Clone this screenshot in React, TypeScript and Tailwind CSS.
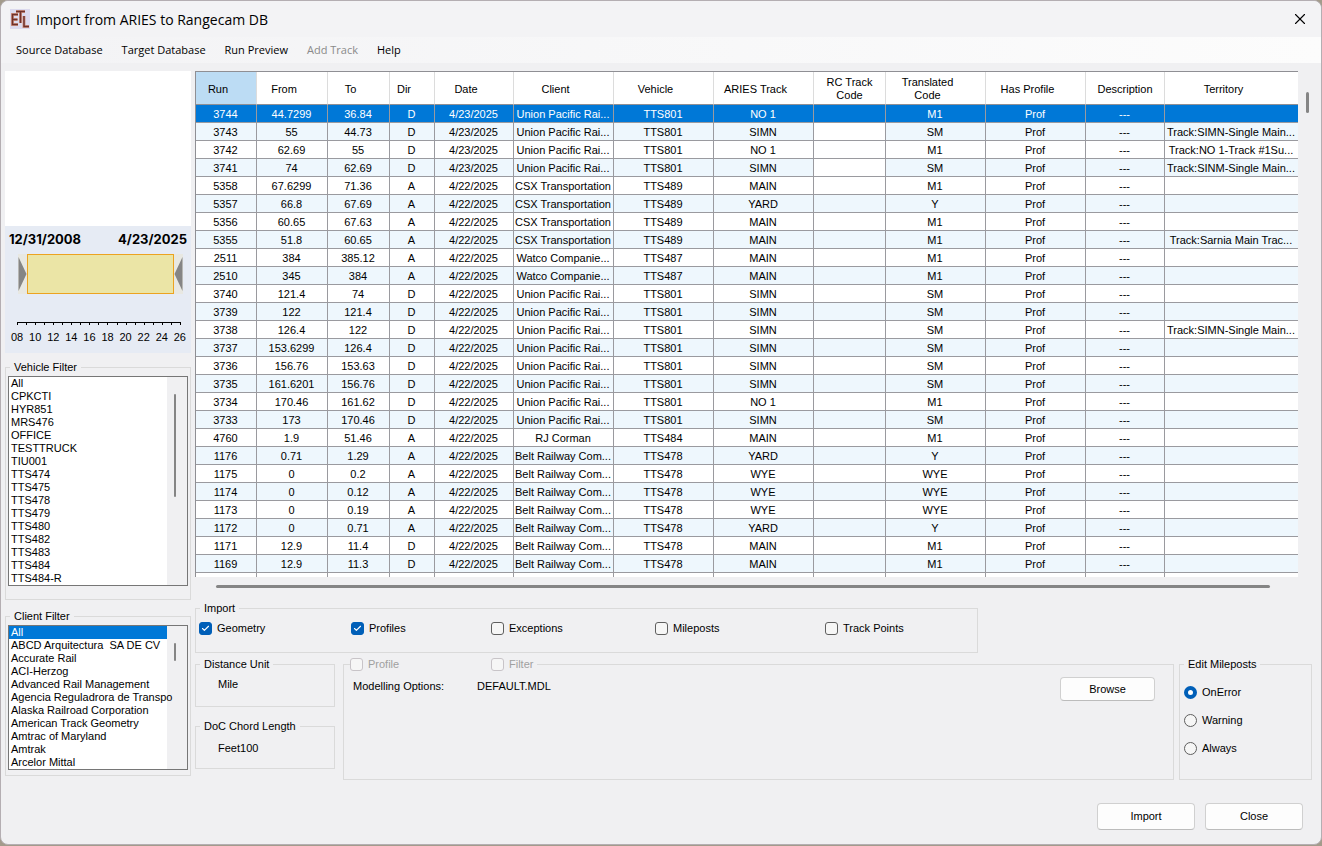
import { Check, X } from "lucide-react";
import type { ReactNode } from "react";

const columns = [
  { title: "Run", width: "w-[61px]", pad: "pr-4" },
  { title: "From", width: "w-[71px]", pad: "pr-4" },
  { title: "To", width: "w-[62px]", pad: "pr-4" },
  { title: "Dir", width: "w-[45px]", pad: "pr-4" },
  { title: "Date", width: "w-[79px]", pad: "pr-4" },
  { title: "Client", width: "w-[100px]", pad: "pr-4" },
  { title: "Vehicle", width: "w-[100px]", pad: "pr-4" },
  { title: "ARIES Track", width: "w-[100px]", pad: "pr-4" },
  { title: "RC Track\nCode", width: "w-[72px]", pad: "pr-0" },
  { title: "Translated\nCode", width: "w-[100px]", pad: "pr-4" },
  { title: "Has Profile", width: "w-[100px]", pad: "pr-4" },
  { title: "Description", width: "w-[79px]", pad: "pr-0" },
  { title: "Territory", width: "", pad: "pr-4" },
];

const UP = "Union Pacific Rai...";
const CSX = "CSX Transportation";
const WATCO = "Watco Companie...";
const BELT = "Belt Railway Com...";

// run, from, to, dir, date, client, vehicle, track, translated code, territory
const runs: string[][] = [
  ["3744", "44.7299", "36.84", "D", "4/23/2025", UP, "TTS801", "NO 1", "M1", ""],
  ["3743", "55", "44.73", "D", "4/23/2025", UP, "TTS801", "SIMN", "SM", "Track:SIMN-Single Main..."],
  ["3742", "62.69", "55", "D", "4/23/2025", UP, "TTS801", "NO 1", "M1", "Track:NO 1-Track #1Su..."],
  ["3741", "74", "62.69", "D", "4/23/2025", UP, "TTS801", "SIMN", "SM", "Track:SINM-Single Main..."],
  ["5358", "67.6299", "71.36", "A", "4/22/2025", CSX, "TTS489", "MAIN", "M1", ""],
  ["5357", "66.8", "67.69", "A", "4/22/2025", CSX, "TTS489", "YARD", "Y", ""],
  ["5356", "60.65", "67.63", "A", "4/22/2025", CSX, "TTS489", "MAIN", "M1", ""],
  ["5355", "51.8", "60.65", "A", "4/22/2025", CSX, "TTS489", "MAIN", "M1", "Track:Sarnia Main Trac..."],
  ["2511", "384", "385.12", "A", "4/22/2025", WATCO, "TTS487", "MAIN", "M1", ""],
  ["2510", "345", "384", "A", "4/22/2025", WATCO, "TTS487", "MAIN", "M1", ""],
  ["3740", "121.4", "74", "D", "4/22/2025", UP, "TTS801", "SIMN", "SM", ""],
  ["3739", "122", "121.4", "D", "4/22/2025", UP, "TTS801", "SIMN", "SM", ""],
  ["3738", "126.4", "122", "D", "4/22/2025", UP, "TTS801", "SIMN", "SM", "Track:SIMN-Single Main..."],
  ["3737", "153.6299", "126.4", "D", "4/22/2025", UP, "TTS801", "SIMN", "SM", ""],
  ["3736", "156.76", "153.63", "D", "4/22/2025", UP, "TTS801", "SIMN", "SM", ""],
  ["3735", "161.6201", "156.76", "D", "4/22/2025", UP, "TTS801", "SIMN", "SM", ""],
  ["3734", "170.46", "161.62", "D", "4/22/2025", UP, "TTS801", "NO 1", "M1", ""],
  ["3733", "173", "170.46", "D", "4/22/2025", UP, "TTS801", "SIMN", "SM", ""],
  ["4760", "1.9", "51.46", "A", "4/22/2025", "RJ Corman", "TTS484", "MAIN", "M1", ""],
  ["1176", "0.71", "1.29", "A", "4/22/2025", BELT, "TTS478", "YARD", "Y", ""],
  ["1175", "0", "0.2", "A", "4/22/2025", BELT, "TTS478", "WYE", "WYE", ""],
  ["1174", "0", "0.12", "A", "4/22/2025", BELT, "TTS478", "WYE", "WYE", ""],
  ["1173", "0", "0.19", "A", "4/22/2025", BELT, "TTS478", "WYE", "WYE", ""],
  ["1172", "0", "0.71", "A", "4/22/2025", BELT, "TTS478", "YARD", "Y", ""],
  ["1171", "12.9", "11.4", "D", "4/22/2025", BELT, "TTS478", "MAIN", "M1", ""],
  ["1169", "12.9", "11.3", "D", "4/22/2025", BELT, "TTS478", "MAIN", "M1", ""],
];

const vehicles = [
  "All", "CPKCTI", "HYR851", "MRS476", "OFFICE", "TESTTRUCK", "TIU001", "TTS474",
  "TTS475", "TTS478", "TTS479", "TTS480", "TTS482", "TTS483", "TTS484", "TTS484-R",
];

const clients = [
  "All", "ABCD Arquitectura  SA DE CV", "Accurate Rail", "ACI-Herzog",
  "Advanced Rail Management", "Agencia Reguladrora de Transpo", "Alaska Railroad Corporation",
  "American Track Geometry", "Amtrac of Maryland", "Amtrak", "Arcelor Mittal",
];

const years = ["08", "10", "12", "14", "16", "18", "20", "22", "24", "26"];
const ticks = Array.from({ length: 19 }, (_, i) => i);

function Group({ title, className, children }: { title: string; className: string; children: ReactNode }) {
  return (
    <fieldset className={`min-w-0 border border-[#dadada] ${className}`}>
      <legend className="ml-1 px-1 leading-[14px]">{title}</legend>
      {children}
    </fieldset>
  );
}

function ListBox({ label, items, selected, thumb }: { label: string; items: string[]; selected?: string; thumb: string }) {
  return (
    <div className="mx-0.5 mt-0.5 flex border border-[#767676]">
      <ul role="listbox" aria-label={label} className="min-w-0 flex-1 bg-white">
        {items.map((item) => (
          <li
            key={item}
            role="option"
            aria-selected={item === selected}
            className={`h-[13px] pl-0.5 leading-[13px] whitespace-pre ${item === selected ? "bg-[#0078d7] text-white" : ""}`}
          >
            {item}
          </li>
        ))}
      </ul>
      <div className="flex w-5 pl-[7px]">
        <div className={`w-0.5 rounded bg-[#858585] ${thumb}`} />
      </div>
    </div>
  );
}

function CheckBox({ label, checked, disabled, className = "" }: { label: string; checked?: boolean; disabled?: boolean; className?: string }) {
  return (
    <label className={`flex items-center gap-[5px] ${disabled ? "text-[#a0a0a0]" : ""} ${className}`}>
      <span className="grid size-[13px]">
        <input
          type="checkbox"
          defaultChecked={checked}
          disabled={disabled}
          className="col-start-1 row-start-1 size-[13px] appearance-none rounded-[3px] border border-[#5f5f5f] bg-[#f6f6f6] checked:border-[#005fb8] checked:bg-[#005fb8] disabled:border-[#c8c4c8]"
        />
        {checked && <Check className="pointer-events-none col-start-1 row-start-1 m-0.5 size-[9px] text-white" strokeWidth={3} />}
      </span>
      {label}
    </label>
  );
}

function Radio({ label, checked }: { label: string; checked?: boolean }) {
  return (
    <label className="flex h-[28px] items-center gap-[5px]">
      <input
        type="radio"
        name="edit-mileposts"
        defaultChecked={checked}
        className="size-[13px] appearance-none rounded-full border border-[#5f5f5f] bg-[#f6f6f6] checked:border-4 checked:border-[#005fb8] checked:bg-white"
      />
      {label}
    </label>
  );
}

const button = "rounded border border-[#d0d0d0] border-b-[#bcbcbc] bg-[#fdfdfd] text-center";

function Logo() {
  return (
    <svg viewBox="0 0 20 20" className="size-5" fill="none" aria-hidden="true">
      <rect width="20" height="20" fill="#dcdaee" />
      <g stroke="#cf9585" strokeWidth="3">
        <path d="M8 5.5H2.5V15.5H8M2.5 10.5H7.5M6 2.5H15M10.5 2.5V14M14 7V17.5H19" />
      </g>
      <g stroke="#6f302c" strokeWidth="1.5">
        <path d="M8 5.5H2.5V15.5H8M2.5 10.5H7.5M6 2.5H15M10.5 2.5V14M14 7V17.5H19" />
      </g>
    </svg>
  );
}

function Timeline() {
  return (
    <section className="bg-[#e6ebf4] px-1 pt-[6px] pb-[9px]">
      <div className="flex justify-between font-[Inter,sans-serif] text-[13px] leading-[14px] font-bold">
        <span>12/31/2008</span>
        <span>4/23/2025</span>
      </div>
      <div className="mt-2 flex h-10 items-stretch bg-[#e6ebf4] pr-1 pl-[9px]">
        <svg viewBox="0 0 9 40" className="h-10 w-[9px] bg-[#e8e8e2]" aria-hidden="true">
          <path d="M0.5 3 8.5 20 0.5 37Z" fill="#858585" />
        </svg>
        <div className="flex-1 border border-[#eca320] bg-[#ebe5a6]" />
        <svg viewBox="0 0 9 40" className="h-10 w-[9px] bg-[#e8e8e2]" aria-hidden="true">
          <path d="M8.5 3 0.5 20 8.5 37Z" fill="#858585" />
        </svg>
      </div>
      <div className="mt-[28px] mr-[6px] ml-2 flex justify-between border-t border-black">
        {ticks.map((t) => (
          <span key={t} className="h-0.5 w-px bg-black" />
        ))}
      </div>
      <div className="mt-[5px] flex justify-between pr-px pl-0.5 leading-[14px]">
        {years.map((y) => (
          <span key={y}>{y}</span>
        ))}
      </div>
    </section>
  );
}

function RunTable() {
  return (
    <div className="flex">
      <div className="min-w-0 flex-1 overflow-hidden border-t border-l border-[#8f8f94] bg-white">
        <table className="w-full table-fixed border-separate border-spacing-0 text-center">
          <thead>
            <tr className="h-[33px]">
              {columns.map((c, i) => (
                <th
                  key={c.title}
                  className={`border-b border-[#8f8f94] pt-0.5 pb-0 pl-0 leading-[13px] font-normal whitespace-pre-line ${c.pad} ${c.width} ${i === 0 ? "bg-[#bcdcf4]" : ""} ${i < 12 ? "border-r border-r-[#dcdcdc]" : ""}`}
                >
                  {c.title}
                </th>
              ))}
            </tr>
          </thead>
          <tbody>
            {runs.map((r, i) => {
              const cells = [...r.slice(0, 8), "", r[8], "Prof", "---", r[9]];
              const tone = i === 0 ? "bg-[#0078d7] text-white" : i % 2 ? "bg-[#eef7fd]" : "bg-white";
              return (
                <tr key={r[0]} className={`h-[18px] ${tone}`}>
                  {cells.map((cell, j) => (
                    <td
                      key={j}
                      className={`h-[18px] overflow-hidden border-b border-[#9a9a9f] p-0 pt-px pr-px leading-[16px] whitespace-nowrap ${j < 12 ? "border-r" : ""} ${j === 8 && (i === 1 || i === 3) ? "bg-white" : ""}`}
                    >
                      {cell}
                    </td>
                  ))}
                </tr>
              );
            })}
            <tr className="h-1">
              {columns.map((c, j) => (
                <td key={c.title} className={`h-1 p-0 ${j < 12 ? "border-r border-[#9a9a9f]" : ""}`} />
              ))}
            </tr>
          </tbody>
        </table>
      </div>
      <div className="flex w-[23px] pt-[21px] pl-2">
        <div className="h-[21px] w-[3px] rounded bg-[#858585]" />
      </div>
    </div>
  );
}

export default function App() {
  return (
    <div className="min-h-screen bg-[#a39b8b]">
      <div className="flex min-h-[845px] flex-col rounded-lg border border-[#b4aeb2] bg-[#f0f0f2] font-['Liberation_Sans',Arial,sans-serif] text-[11px] text-black">
        <header className="flex h-[36px] items-center rounded-t-lg bg-[#f3f3f5] pr-3 pl-[9px]">
          <Logo />
          <h1 className="ml-[6px] flex-1 font-['Open_Sans',sans-serif] text-[14px]">Import from ARIES to Rangecam DB</h1>
          <button type="button" aria-label="Close window">
            <X className="size-[18px]" strokeWidth={1.5} />
          </button>
        </header>
        <nav className="flex h-[26px] items-center gap-[19px] bg-gradient-to-r from-[#f3f3f5] to-[#fcfcfc] pl-[15px] font-['Open_Sans',sans-serif] text-[11px]">
          <button type="button">Source Database</button>
          <button type="button">Target Database</button>
          <button type="button">Run Preview</button>
          <button type="button" disabled className="text-[#8a8a8a]">Add Track</button>
          <button type="button">Help</button>
        </nav>

        <main className="flex pt-2 pl-1">
          <aside className="flex w-[186px] flex-col">
            <div className="h-[155px] bg-white" />
            <Timeline />
            <Group title="Vehicle Filter" className="mt-[7px] pb-[13px]">
              <ListBox label="Vehicle Filter" items={vehicles} thumb="mt-[17px] h-[103px]" />
            </Group>
            <Group title="Client Filter" className="mt-[9px] pb-[5px]">
              <ListBox label="Client Filter" items={clients} selected="All" thumb="mt-[17px] h-[18px]" />
            </Group>
          </aside>

          <div className="ml-1 min-w-0 flex-1">
            <RunTable />
            <div className="mt-2 mr-[51px] ml-[21px] h-[3px] rounded bg-[#858585]" />

            <Group title="Import" className="mt-[13px] h-[52px] w-[783px]">
              <div className="flex items-center pt-[5px] pl-[3px]">
                <CheckBox label="Geometry" checked className="w-[152px]" />
                <CheckBox label="Profiles" checked className="w-[140px]" />
                <CheckBox label="Exceptions" className="w-[164px]" />
                <CheckBox label="Mileposts" className="w-[170px]" />
                <CheckBox label="Track Points" />
              </div>
            </Group>

            <div className="mt-1 mr-[9px] flex">
              <div className="w-[140px]">
                <Group title="Distance Unit" className="h-[50px]">
                  <p className="pt-[6px] pl-[22px] leading-[14px]">Mile</p>
                </Group>
                <Group title="DoC Chord Length" className="mt-[12px] h-[50px]">
                  <p className="pt-2 pl-[22px] leading-[14px]">Feet100</p>
                </Group>
              </div>

              <fieldset className="ml-2 h-[123px] min-w-0 flex-1 border border-[#dadada]">
                <legend className="ml-[6px] flex">
                  <CheckBox label="Profile" disabled className="w-[141px] leading-[14px]" />
                  <CheckBox label="Filter" disabled className="pr-1 leading-[14px]" />
                </legend>
                <div className="flex items-start pr-[18px] pl-[9px]">
                  <span className="w-[124px] pt-2 leading-[14px]">Modelling Options:</span>
                  <span className="flex-1 pt-2 leading-[14px]">DEFAULT.MDL</span>
                  <button type="button" className={`mt-[6px] h-6 w-[95px] ${button}`}>Browse</button>
                </div>
              </fieldset>

              <Group title="Edit Mileposts" className="ml-[5px] h-[123px] w-[133px]">
                <div className="pt-[7px] pl-1">
                  <Radio label="OnError" checked />
                  <Radio label="Warning" />
                  <Radio label="Always" />
                </div>
              </Group>
            </div>
            <div className="mt-[23px] mr-[18px] flex justify-end gap-[10px] pb-3">
              <button type="button" className={`h-[27px] w-[98px] ${button}`}>Import</button>
              <button type="button" className={`h-[27px] w-[98px] ${button}`}>Close</button>
            </div>
          </div>
        </main>
      </div>
    </div>
  );
}
